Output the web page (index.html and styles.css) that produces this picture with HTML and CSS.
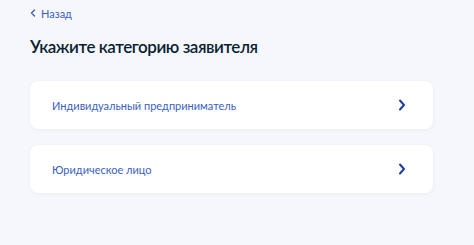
FILE: index.html
```html
<!DOCTYPE html>
<html lang="ru">
<head>
<meta charset="utf-8">
<link rel="stylesheet" href="styles.css">
</head>
<body>
<div class="page">
  <a class="back" href="#">
    <svg class="back-icon" width="6" height="8" viewBox="0 0 6 8"><path d="M4.5 1 L1.5 4 L4.5 7" fill="none" stroke="#3a5fc0" stroke-width="1.4" stroke-linecap="round" stroke-linejoin="round"/></svg>
    <span>Назад</span>
  </a>
  <h1 class="title">Укажите категорию заявителя</h1>
  <div class="list">
    <a class="card" href="#">
      <span class="card-text">Индивидуальный предприниматель</span>
      <svg class="chev" width="8" height="12" viewBox="0 0 8 12"><path d="M2 1.5 L6 6 L2 10.5" fill="none" stroke="#1c3da8" stroke-width="2" stroke-linecap="round" stroke-linejoin="round"/></svg>
    </a>
    <a class="card" href="#">
      <span class="card-text">Юридическое лицо</span>
      <svg class="chev" width="8" height="12" viewBox="0 0 8 12"><path d="M2 1.5 L6 6 L2 10.5" fill="none" stroke="#1c3da8" stroke-width="2" stroke-linecap="round" stroke-linejoin="round"/></svg>
    </a>
  </div>
</div>
</body>
</html>
```
FILE: styles.css
```css
html, body {
  margin: 0;
  padding: 0;
  background: #f5f7fc;
}
body {
  font-family: Lato, "Noto Sans", sans-serif;
  width: 474px;
  height: 245px;
  overflow: hidden;
}
.page {
  padding: 5px 41px 0 30px;
}
.back {
  display: flex;
  align-items: center;
  gap: 5px;
  height: 16px;
  text-decoration: none;
  color: #3a5fc0;
  font-size: 11px;
}
.back-icon {
  display: block;
}
.title {
  margin: 14px 0 0;
  font-size: 17px;
  line-height: 24px;
  font-weight: 600;
  color: #0b1f33;
  letter-spacing: -0.45px;
}
.list {
  margin-top: 22px;
  display: flex;
  flex-direction: column;
  gap: 16px;
}
.card {
  display: flex;
  align-items: center;
  justify-content: space-between;
  height: 48px;
  padding: 0 27px 0 22px;
  background: #ffffff;
  border-radius: 8px;
  box-shadow: 0 1px 4px rgba(140, 160, 200, 0.12);
  text-decoration: none;
}
.card-text {
  font-size: 11px;
  color: #3a5fbf;
}
.chev {
  display: block;
}
```
